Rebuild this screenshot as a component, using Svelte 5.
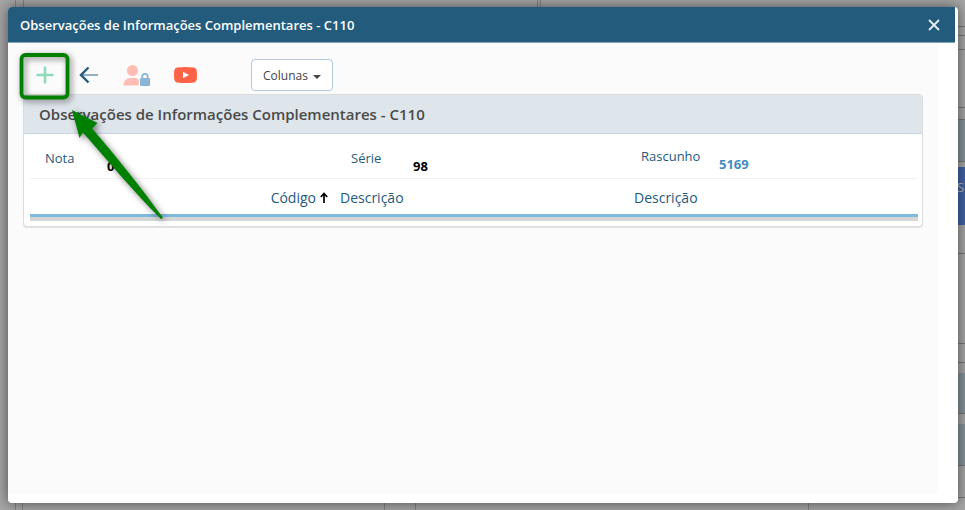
<script>
  const title = 'Observações de Informações Complementares - C110';

  // Strips of the page that show behind the dialog
  const topCells = [16, 8, 514, 3];
  const bottomCells = [16, 7, 362, 31, 393];
  const sideBlocks = [
    { height: 27, kind: 'line' },
    { height: 9, kind: 'line' },
    { height: 14, kind: 'line' },
    { height: 58, kind: 'line' },
    { height: 12, kind: 'line' },
    { height: 42, kind: 'panel' },
    { height: 5, kind: 'gap' },
    { height: 58, kind: 'action' },
    { height: 29, kind: 'line' },
    { height: 90, kind: 'line' },
    { height: 19, kind: 'line' },
    { height: 10, kind: 'gap' },
    { height: 41, kind: 'panel' },
    { height: 10, kind: 'gap' },
    { height: 42, kind: 'panel' },
    { height: 32, kind: 'line' },
  ];
</script>

<div class="page">
  <div class="strip">
    {#each topCells as width}
      <span style="width: {width}px"></span>
    {/each}
  </div>
  <div class="side">
    {#each sideBlocks as block}
      <div class={block.kind} style="height: {block.height}px">
        {#if block.kind === 'action'}S{/if}
      </div>
    {/each}
  </div>
  <div class="strip">
    {#each bottomCells as width}
      <span style="width: {width}px"></span>
    {/each}
  </div>

  <div class="modal" role="dialog" aria-label={title}>
    <header class="modal-header">
      <h1>{title}</h1>
      <button class="close" aria-label="Fechar">
        <svg width="12" height="12" viewBox="0 0 12 12">
          <path d="M1 1L11 11M11 1L1 11" stroke="#e6eef3" stroke-width="1.8" />
        </svg>
      </button>
    </header>

    <main class="modal-body">
      <div class="toolbar">
        <button class="tool" aria-label="Adicionar">
          <svg width="18" height="18" viewBox="0 0 18 18">
            <path d="M9 1.5V16.5M1.5 9H16.5" stroke="#8fdab8" stroke-width="2.6" stroke-linecap="round" />
          </svg>
        </button>
        <button class="tool" aria-label="Voltar">
          <svg width="20" height="18" viewBox="0 0 20 18">
            <path d="M4 9H20" stroke="#94afc2" stroke-width="2" />
            <path d="M10.5 1.5L3 9L10.5 16.5" fill="none" stroke="#235b7c" stroke-width="2.4" />
          </svg>
        </button>
        <button class="tool" aria-label="Permissões do usuário">
          <svg width="28" height="22" viewBox="0 0 28 22">
            <circle cx="10.5" cy="6.5" r="5.5" fill="#ffbdb3" />
            <path d="M1.5 21.5C1.500 17 4 14 8.500 14H12C14 14 15.5 14.6 16.8 15.5V21.5Z" fill="#ffbdb3" />
            <path d="M20.3 15V12.5a2.7 2.7 0 0 1 5.4 0V15" fill="none" stroke="#8ab6d6" stroke-width="1.8" />
            <rect x="18" y="14" width="10" height="8" rx="1" fill="#8ab6d6" />
          </svg>
        </button>
        <button class="tool" aria-label="Vídeo de ajuda">
          <svg width="23" height="16" viewBox="0 0 23 16">
            <path d="M3 0.6Q11.5 -0.6 20 0.6Q22.4 1 22.7 3.4Q23.3 8 22.7 12.6Q22.4 15 20 15.4Q11.5 16.6 3 15.4Q0.6 15 0.3 12.6Q-0.3 8 0.3 3.4Q0.6 1 3 0.6Z" fill="#ff6347" />
            <path d="M9 4.7L15 8L9 11.3Z" fill="#fff" />
          </svg>
        </button>
        <button class="columns">Colunas <span class="caret"></span></button>
      </div>

      <section class="card">
        <h2>{title}</h2>
        <div class="card-body">
          <dl class="summary">
            <div><dt>Nota</dt><dd>0</dd></div>
            <div><dt>Série</dt><dd>98</dd></div>
            <div class="draft"><dt>Rascunho</dt><dd>5169</dd></div>
          </dl>
          <table>
            <thead>
              <tr>
                <th class="code">
                  Código<svg width="8" height="11" viewBox="0 0 8 11">
                    <path d="M4 11V1.5M0.8 5L4 1.5L7.2 5" fill="none" stroke="#000" stroke-width="1.7" />
                  </svg>
                </th>
                <th class="description">Descrição</th>
                <th>Descrição</th>
              </tr>
            </thead>
          </table>
        </div>
      </section>
    </main>
  </div>

  <svg class="pointer" width="160" height="184" viewBox="0 0 160 184" aria-hidden="true">
    <rect x="6.5" y="7" width="46" height="42.5" rx="4" fill="none" stroke="#008000" stroke-width="3.8" />
    <path d="M57 62L82.5 75L77 80.5C100 107 129 143 148 170L146 171C119 144 92 112 68 84.5L64.5 90Z" fill="#008000" />
  </svg>
</div>

<style>
  :global(body) {
    margin: 0;
  }

  .page {
    position: relative;
    display: grid;
    grid-template-rows: 8px 1fr 8px;
    min-height: 100vh;
    overflow: hidden;
    background: #a6a6a6;
    font-family: 'Segoe UI', 'Open Sans', sans-serif;
  }

  .strip {
    display: flex;
  }

  .strip span {
    box-sizing: border-box;
    border-right: 1px solid #858585;
  }

  .side {
    width: 8px;
    height: 0;
    margin-top: -8px;
    justify-self: end;
    color: #b8b8b8;
    font-size: 13px;
    line-height: 40px;
  }

  .side div {
    box-sizing: border-box;
    border-bottom: 1px solid #777;
    overflow: hidden;
  }

  .side .gap {
    border: 0;
  }

  .side .panel {
    background: #87939a;
  }

  .side .action {
    border: 0;
    background: #4363a8;
  }

  .modal {
    position: absolute;
    inset: 7px 7px 7px 8px;
    display: flex;
    flex-direction: column;
    border-radius: 4px;
    background: #fff;
    box-shadow: 0 0 14px rgba(0, 0, 0, 0.55);
  }

  .modal-header {
    display: flex;
    align-items: center;
    justify-content: space-between;
    height: 36px;
    margin-right: 3px;
    padding: 0 15px 0 12px;
    border-bottom: 1px solid #84a5ba;
    border-radius: 4px 0 0;
    box-sizing: border-box;
    background: #235b7c;
    color: #fff;
  }

  h1 {
    margin: 0;
    font-size: 13px;
    font-weight: 600;
  }

  button {
    padding: 0;
    border: 0;
    background: none;
    font-family: inherit;
    cursor: pointer;
  }

  svg {
    display: block;
  }

  .modal-body {
    flex: 1;
    margin: 0 20px 9px 0;
    padding: 16px 15px 0;
    background: #fbfbfb;
  }

  .toolbar {
    display: flex;
    align-items: center;
    height: 32px;
    padding-left: 13px;
    margin-bottom: 3px;
  }

  .tool + .tool {
    margin-left: 24px;
  }

  .columns {
    height: 32px;
    margin-left: 54px;
    padding: 0 11px;
    border: 1px solid #b0c7de;
    border-radius: 4px;
    background: #fff;
    color: #444;
    font-size: 12px;
  }

  .caret {
    display: inline-block;
    margin-left: 2px;
    border: 4px solid transparent;
    border-top-color: #444;
    border-bottom: 0;
    vertical-align: 1px;
  }

  .card {
    border: 1px solid #dcdcdc;
    border-radius: 4px;
    background: #fff;
    box-shadow: 0 1px 1px rgba(0, 0, 0, 0.1);
  }

  h2 {
    margin: 0;
    padding: 0 15px;
    border-bottom: 1px solid #c8d6e5;
    border-radius: 3px 3px 0 0;
    background: #dee5eb;
    color: #4a4a4a;
    font-size: 15px;
    font-weight: 600;
    line-height: 38px;
  }

  .card-body {
    padding: 0 4px 5px 6px;
  }

  .summary {
    display: grid;
    grid-template-columns: 306px 290px 1fr;
    height: 45px;
    margin: 0;
    padding-left: 15px;
    border-bottom: 1px solid #f3f3f3;
    box-sizing: border-box;
    font-size: 13px;
  }

  .summary div {
    display: grid;
    grid-template-columns: 62px 1fr;
  }

  .summary .draft {
    grid-template-columns: 78px 1fr;
  }

  dt {
    padding-top: 14px;
    color: #235b7c;
    font-weight: 500;
    line-height: 20px;
  }

  dd {
    margin: 0;
    padding-top: 22px;
    color: #000;
    font-weight: 700;
    line-height: 20px;
  }

  .draft dt {
    padding-top: 12px;
  }

  .draft dd {
    padding-top: 20px;
    color: #3f8dbf;
  }

  table {
    width: 100%;
    border-bottom: 4px solid #d6d6d6;
    border-collapse: separate;
    border-spacing: 0;
    table-layout: fixed;
  }

  th {
    height: 38px;
    padding: 1px 0 0;
    border-bottom: 3px solid #7fb9dd;
    box-sizing: border-box;
    color: #235b7c;
    font-size: 14px;
    font-weight: 500;
    text-align: left;
  }

  .code {
    width: 310px;
    padding-right: 12px;
    text-align: right;
  }

  .code svg {
    display: inline-block;
    margin-left: 4px;
  }

  .description {
    width: 294px;
  }

  .pointer {
    position: absolute;
    top: 48px;
    left: 15px;
    overflow: visible;
    filter: drop-shadow(2px 2px 3px rgba(0, 0, 0, 0.5));
    pointer-events: none;
  }
</style>
